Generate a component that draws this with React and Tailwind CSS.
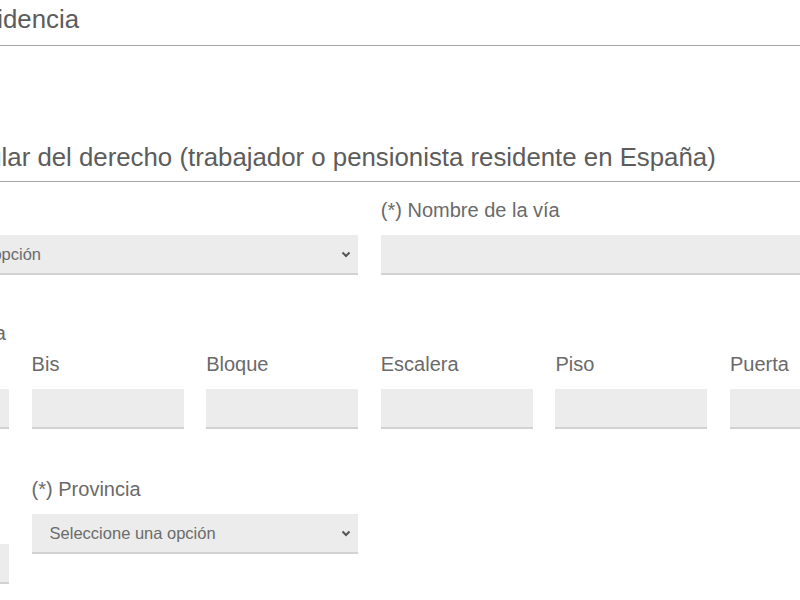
import React from "react";

const labelCls = "block text-[20px] leading-[24px] text-[#6a6a6a]";
const boxCls = "h-[40px] w-full bg-[#ececec] border-b-2 border-[#d2d2d2]";

function Chevron() {
  return (
    <svg width="10" height="7" viewBox="0 0 10 7" className="shrink-0">
      <polyline points="1.5,1.5 5,5 8.5,1.5" fill="none" stroke="#555" strokeWidth="2" />
    </svg>
  );
}

function Select({ placeholder = "Seleccione una opción" }) {
  return (
    <div className={`${boxCls} flex items-center justify-between pl-[18px] pr-[7px]`}>
      <span className="text-[16.5px] text-[#6b6b6b] whitespace-nowrap">{placeholder}</span>
      <Chevron />
    </div>
  );
}

function Input() {
  return <div className={boxCls}></div>;
}

function Field({ label, children, gap = "mb-[13px]", className = "" }) {
  return (
    <div className={`flex flex-col ${className}`}>
      <label className={`${labelCls} ${gap}`}>{label}</label>
      {children}
    </div>
  );
}

function SectionTitle({ children, className = "" }) {
  return (
    <div className={`border-b border-[#a6a6a6] ${className}`}>
      <h2 className="ml-[-6px] text-[25.8px] leading-[32px] text-[#5c5c5c] whitespace-nowrap">{children}</h2>
    </div>
  );
}

export default function App() {
  return (
    <div className="w-[800px] h-[600px] overflow-hidden bg-white font-['Liberation_Sans',Arial,sans-serif]">
      <div className="ml-[-143px] w-[1025px] pt-[3px]">
        {/* Datos de residencia */}
        <SectionTitle className="pb-[10px]">Datos de residencia</SectionTitle>

        {/* Titular */}
        <SectionTitle className="mt-[95px] pb-[8px]">
          Datos del titular del derecho (trabajador o pensionista residente en España)
        </SectionTitle>

        {/* Fila 1 */}
        <div className="grid grid-cols-[repeat(6,152px)] gap-x-[22.6px] mt-[16px]">
          <Field label="(*) Tipo de vía" className="col-span-3">
            <Select />
          </Field>
          <Field label="(*) Nombre de la vía" className="col-span-3">
            <Input />
          </Field>
        </div>

        {/* Fila 2 */}
        <div className="grid grid-cols-[repeat(6,152px)] gap-x-[22.6px] items-end mt-[22px]">
          <Field label="(*) Kilómetro o número de la vía" gap="mb-[44px]">
            <Input />
          </Field>
          <Field label="Bis">
            <Input />
          </Field>
          <Field label="Bloque">
            <Input />
          </Field>
          <Field label="Escalera">
            <Input />
          </Field>
          <Field label="Piso">
            <Input />
          </Field>
          <Field label="Puerta">
            <Input />
          </Field>
        </div>

        {/* Fila 3 */}
        <div className="grid grid-cols-[repeat(6,152px)] gap-x-[22.6px] items-start mt-[48px]">
          <Field label="(*) Localidad / Municipio" gap="mb-[19px]">
            <Input />
          </Field>
          <Field label="(*) Provincia" className="col-span-2">
            <Select />
          </Field>
        </div>
      </div>
    </div>
  );
}
